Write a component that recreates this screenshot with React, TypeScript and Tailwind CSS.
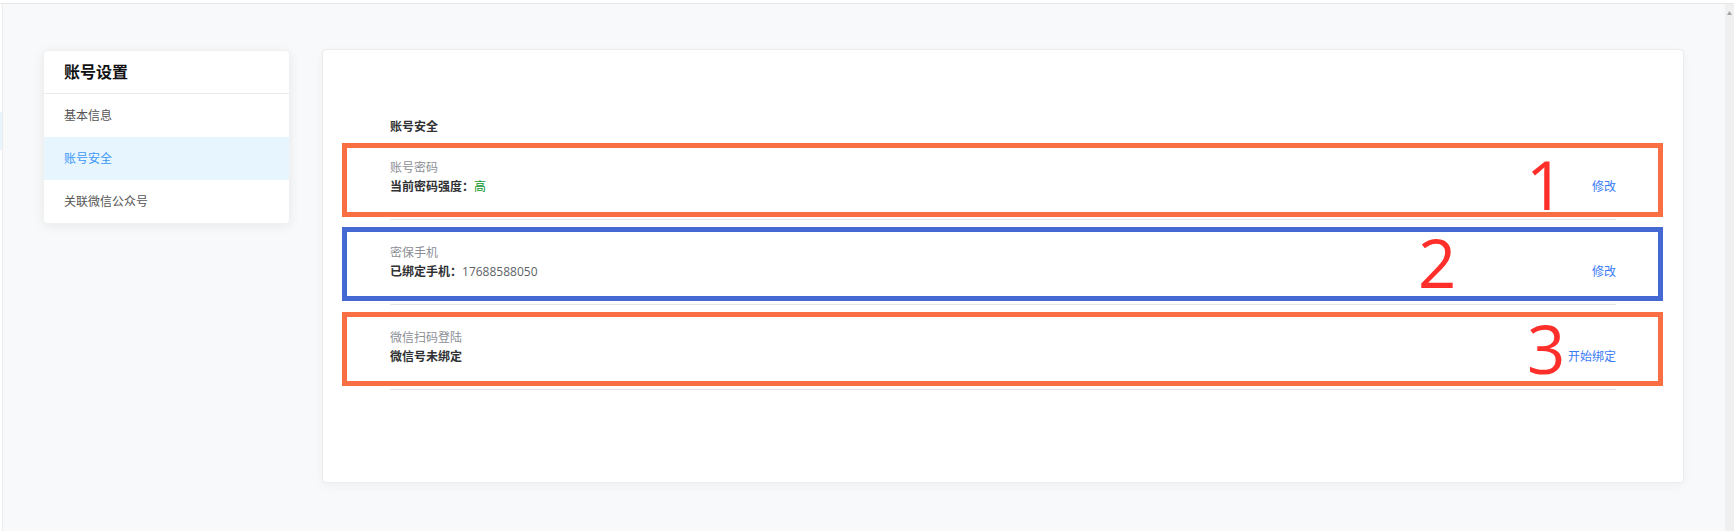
import React from "react";

type Row = {
  label: string;
  value: React.ReactNode;
  action: string;
  frame: string;
  num: string;
  numPos: string;
};

const rows: Row[] = [
  {
    label: "账号密码",
    value: (
      <>
        <span className="font-bold text-[#303133]">当前密码强度：</span>
        <span className="text-[#11962b]">高</span>
      </>
    ),
    action: "修改",
    frame: "border-[#f96f43] top-[8px] bottom-[2px]",
    num: "1",
    numPos: "left-[1136px] top-[16px]",
  },
  {
    label: "密保手机",
    value: (
      <>
        <span className="font-bold text-[#303133]">已绑定手机：</span>
        <span className="text-[#606266]">17688588050</span>
      </>
    ),
    action: "修改",
    frame: "border-[#4469d3] top-[7px] bottom-[3px]",
    num: "2",
    numPos: "left-[1028px] top-[9px]",
  },
  {
    label: "微信扫码登陆",
    value: <span className="font-bold text-[#303133]">微信号未绑定</span>,
    action: "开始绑定",
    frame: "border-[#f96f43] top-[7px] bottom-[3px]",
    num: "3",
    numPos: "left-[1137px] top-[10px]",
  },
];

const menu = ["基本信息", "账号安全", "关联微信公众号"];

export default function App() {
  return (
    <div className="h-[531px] w-full flex flex-col bg-[#f8f9fb] font-['Open_Sans','Noto_Sans_CJK_SC',sans-serif] overflow-hidden">
      <div className="h-[4px] shrink-0 bg-white border-b border-[#e6e6e6]" />
      <div className="flex flex-1 min-h-0">
        {/* left edge strip */}
        <div className="w-[3px] shrink-0 bg-white border-r border-[#ececec] flex flex-col">
          <div className="h-[108px]" />
          <div className="h-[38px] bg-[#e9f5fd]" />
        </div>

        <div className="flex-1 flex items-start gap-[32px] pl-[40px] pt-[45px]">
          {/* sidebar */}
          <div className="w-[247px] mt-[1px] bg-white rounded-[4px] border border-[#f0f0f0] shadow-[0_2px_12px_rgba(0,0,0,0.07)] overflow-hidden">
            <div className="h-[43px] flex items-center pl-[20px] border-b border-[#ebebeb] text-[16px] font-bold text-[#111]">
              账号设置
            </div>
            {menu.map((m) => (
              <div
                key={m}
                className={
                  m === "账号安全"
                    ? "h-[43px] flex items-center pl-[20px] text-[12px] bg-[#e6f5fe] text-[#3d97f7]"
                    : "h-[43px] flex items-center pl-[20px] text-[12px] text-[#555]"
                }
              >
                {m}
              </div>
            ))}
          </div>

          {/* main card */}
          <div className="w-[1362px] h-[434px] bg-white rounded-[4px] border border-[#ececec] shadow-[0_3px_10px_rgba(0,0,0,0.04)] px-[67px] pt-[69px]">
            <div className="text-[12px] leading-[16px] font-bold text-[#303133]">账号安全</div>
            {rows.map((r) => (
              <div
                key={r.label}
                className="relative flex items-end justify-between pt-[25px] pb-[24px] border-b border-[#e4e4e7]"
              >
                <div className="flex flex-col gap-[3px] text-[12px] leading-[16px]">
                  <div className="text-[#8c8f96]">{r.label}</div>
                  <div>{r.value}</div>
                </div>
                <div className="text-[12px] leading-[16px] text-[#3a7bf6] cursor-pointer">{r.action}</div>

                {/* annotation overlay */}
                <div className={`absolute -left-[48px] -right-[47px] border-[5px] pointer-events-none ${r.frame}`} />
                <div
                  className={`absolute ${r.numPos} text-[67px] leading-none font-normal text-[#fe2f2a] pointer-events-none`}
                >
                  {r.num}
                </div>
              </div>
            ))}
          </div>
        </div>

        {/* scrollbar */}
        <div className="w-[9px] shrink-0 bg-[#f0f0f0] flex justify-center pt-[7px]">
          <svg width="5" height="4" viewBox="0 0 5 4">
            <path d="M2.5 0 L5 4 L0 4 Z" fill="#a3a3a3" />
          </svg>
        </div>
      </div>
    </div>
  );
}
